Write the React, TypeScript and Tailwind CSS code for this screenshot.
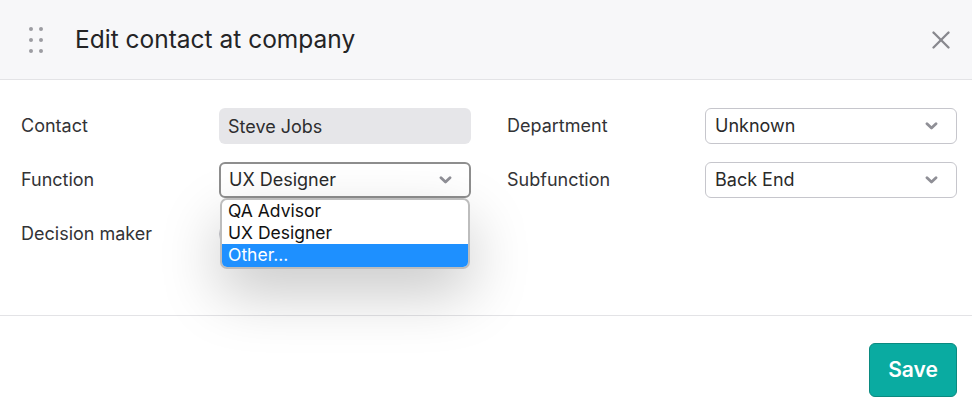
import { X } from 'lucide-react'

const font = { fontFamily: 'Inter, "Noto Sans", sans-serif' }

function Chevron() {
  return (
    <svg width="13" height="8" viewBox="0 0 13 8" className="shrink-0">
      <polyline points="2,1.8 6.5,6 11,1.8" fill="none" stroke="#8f8f96" strokeWidth="2.8" strokeLinecap="round" strokeLinejoin="round" />
    </svg>
  )
}

function DragHandle() {
  return (
    <div className="grid w-[12px] grid-cols-2 gap-x-[7px] gap-y-[7px]">
      {Array.from({ length: 6 }).map((_, i) => (
        <span key={i} className="block h-[4px] w-[4px] rounded-full bg-[#9c9ca2]" />
      ))}
    </div>
  )
}

function Select({ value, focused }: { value: string; focused?: boolean }) {
  return (
    <div
      className={
        focused
          ? 'flex h-[36px] w-[252px] items-center justify-between rounded-[6px] border-2 border-[#8e8e8e] bg-white pl-[8px] pr-[17px]'
          : 'flex h-[36px] w-[252px] items-center justify-between rounded-[6px] border border-[#c6c6cc] bg-white pl-[9px] pr-[18px]'
      }
    >
      <span className="text-[18px] leading-[22px] text-[#2a2a2a]">{value}</span>
      <Chevron />
    </div>
  )
}

function Row({ label, children }: { label: string; children: React.ReactNode }) {
  return (
    <div className="flex h-[36px] items-center">
      <span className="w-[198px] pb-[1px] text-[18px] leading-[22px] text-[#333336]">{label}</span>
      {children}
    </div>
  )
}

export default function App() {
  return (
    <div style={font} className="h-[419px] w-[972px] overflow-hidden bg-white">
      {/* Header */}
      <div className="flex h-[80px] items-center border-b border-[#e3e3e6] bg-[#f7f7f9] pl-[29px] pr-[16px]">
        <DragHandle />
        <h2 className="ml-[34px] text-[24.5px] text-[#242426]">Edit contact at company</h2>
        <button className="ml-auto text-[#88888e]">
          <X className="h-[30px] w-[30px]" strokeWidth={1.9} />
        </button>
      </div>

      {/* Body */}
      <div className="flex h-[236px] gap-[36px] border-b border-[#e3e3e6] pl-[21px] pt-[28px]">
        <div className="flex flex-col gap-[18px]">
          <Row label="Contact">
            <div className="flex h-[36px] w-[252px] items-center rounded-[6px] bg-[#e6e6e9] px-[9px] text-[18px] text-[#2e2e30]">
              Steve Jobs
            </div>
          </Row>
          <Row label="Function">
            <div className="relative">
              <Select value="UX Designer" focused />
              <div className="absolute left-[1px] top-[36px] z-10 w-[250px] overflow-hidden rounded-[7px] border-2 border-[#bdbdbd] bg-white shadow-[0_24px_60px_rgba(0,0,0,0.22)]">
                <div className="h-[22px] px-[6px] text-[17.5px] leading-[21px] text-[#111]">QA Advisor</div>
                <div className="h-[22px] px-[6px] text-[17.5px] leading-[21px] text-[#111]">UX Designer</div>
                <div className="h-[23px] bg-[#1e90ff] px-[6px] text-[17.5px] leading-[21px] text-white">Other...</div>
              </div>
            </div>
          </Row>
          <Row label="Decision maker">
            <div className="h-[24px] w-[44px] rounded-full border border-[#c6c6cc] bg-white" />
          </Row>
        </div>
        <div className="flex flex-col gap-[18px]">
          <Row label="Department">
            <Select value="Unknown" />
          </Row>
          <Row label="Subfunction">
            <Select value="Back End" />
          </Row>
        </div>
      </div>

      {/* Footer */}
      <div className="flex justify-end pr-[15px] pt-[27px]">
        <button className="h-[54px] w-[88px] rounded-[6px] border border-[#0a8a80] bg-[#0aaba1] text-[21px] font-semibold text-white">
          Save
        </button>
      </div>
    </div>
  )
}
